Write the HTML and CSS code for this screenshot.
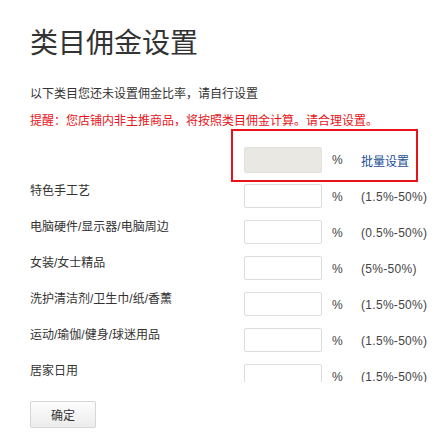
FILE: index.html
```html
<!DOCTYPE html>
<html lang="zh-CN">
<head>
<meta charset="utf-8">
<title>类目佣金设置</title>
<link rel="stylesheet" href="styles.css">
</head>
<body>
<div class="page">
  <h1 class="title">类目佣金设置</h1>
  <p class="intro">以下类目您还未设置佣金比率，请自行设置</p>
  <p class="warn">提醒：您店铺内非主推商品，将按照类目佣金计算。请合理设置。</p>
  <div class="batch">
    <input class="rate rate-batch" type="text">
    <span class="pct">%</span>
    <a class="batch-link" href="#">批量设置</a>
  </div>
  <div class="list">
    <div class="row">
      <span class="label">特色手工艺</span>
      <input class="rate" type="text">
      <span class="pct">%</span>
      <span class="range">(1.5%-50%)</span>
    </div>
    <div class="row">
      <span class="label">电脑硬件/显示器/电脑周边</span>
      <input class="rate" type="text">
      <span class="pct">%</span>
      <span class="range">(0.5%-50%)</span>
    </div>
    <div class="row">
      <span class="label">女装/女士精品</span>
      <input class="rate" type="text">
      <span class="pct">%</span>
      <span class="range">(5%-50%)</span>
    </div>
    <div class="row">
      <span class="label">洗护清洁剂/卫生巾/纸/香薰</span>
      <input class="rate" type="text">
      <span class="pct">%</span>
      <span class="range">(1.5%-50%)</span>
    </div>
    <div class="row">
      <span class="label">运动/瑜伽/健身/球迷用品</span>
      <input class="rate" type="text">
      <span class="pct">%</span>
      <span class="range">(1.5%-50%)</span>
    </div>
    <div class="row">
      <span class="label">居家日用</span>
      <input class="rate" type="text">
      <span class="pct">%</span>
      <span class="range">(1.5%-50%)</span>
    </div>
  </div>
  <button class="submit" type="button">确定</button>
</div>
</body>
</html>
```
FILE: styles.css
```css
html, body {
  margin: 0;
  padding: 0;
  background: #fff;
}
body {
  font-family: "Liberation Sans", "Noto Sans CJK SC", sans-serif;
  font-size: 12px;
  color: #333;
}
.page {
  padding: 30px 0 0 30px;
}
.title {
  margin: 0;
  font-size: 28px;
  line-height: 28px;
  font-weight: normal;
  color: #333;
}
.intro {
  margin: 28px 0 0;
  line-height: 16px;
}
.warn {
  margin: 11px 0 0;
  line-height: 16px;
  color: #e8141a;
}
.batch {
  margin-left: 201px;
  width: 187px;
  box-sizing: border-box;
  border: 2px solid #e8141a;
  padding: 16px 0 7px 11px;
  display: flex;
  align-items: center;
}
.rate {
  width: 78px;
  height: 24px;
  box-sizing: border-box;
  border: 1px solid #ddd;
  border-radius: 2px;
  background: #fff;
  margin: 0;
  padding: 0 4px;
  font: inherit;
  flex: none;
}
.rate-batch {
  height: 26px;
  background: #e9e8e3;
  border-color: #e2e1dc;
}
.pct {
  width: 39px;
  box-sizing: border-box;
  padding-left: 10px;
  flex: none;
  color: #444;
}
.batch-link {
  color: #1d4f95;
  text-decoration: none;
}
.list {
  height: 200px;
  overflow: hidden;
}
.row {
  display: flex;
  align-items: flex-start;
  height: 36px;
  padding-top: 2px;
  box-sizing: border-box;
}
.label {
  width: 214px;
  flex: none;
  line-height: 14px;
}
.row .pct,
.range {
  line-height: 26px;
}
.range {
  color: #444;
  letter-spacing: 0.3px;
  white-space: nowrap;
}
.submit {
  display: block;
  margin-top: 19px;
  width: 66px;
  height: 27px;
  padding: 0;
  border: 1px solid #d6d6d6;
  border-radius: 2px;
  background: linear-gradient(#fdfdfd, #ececec);
  font: inherit;
  color: #333;
}
```
